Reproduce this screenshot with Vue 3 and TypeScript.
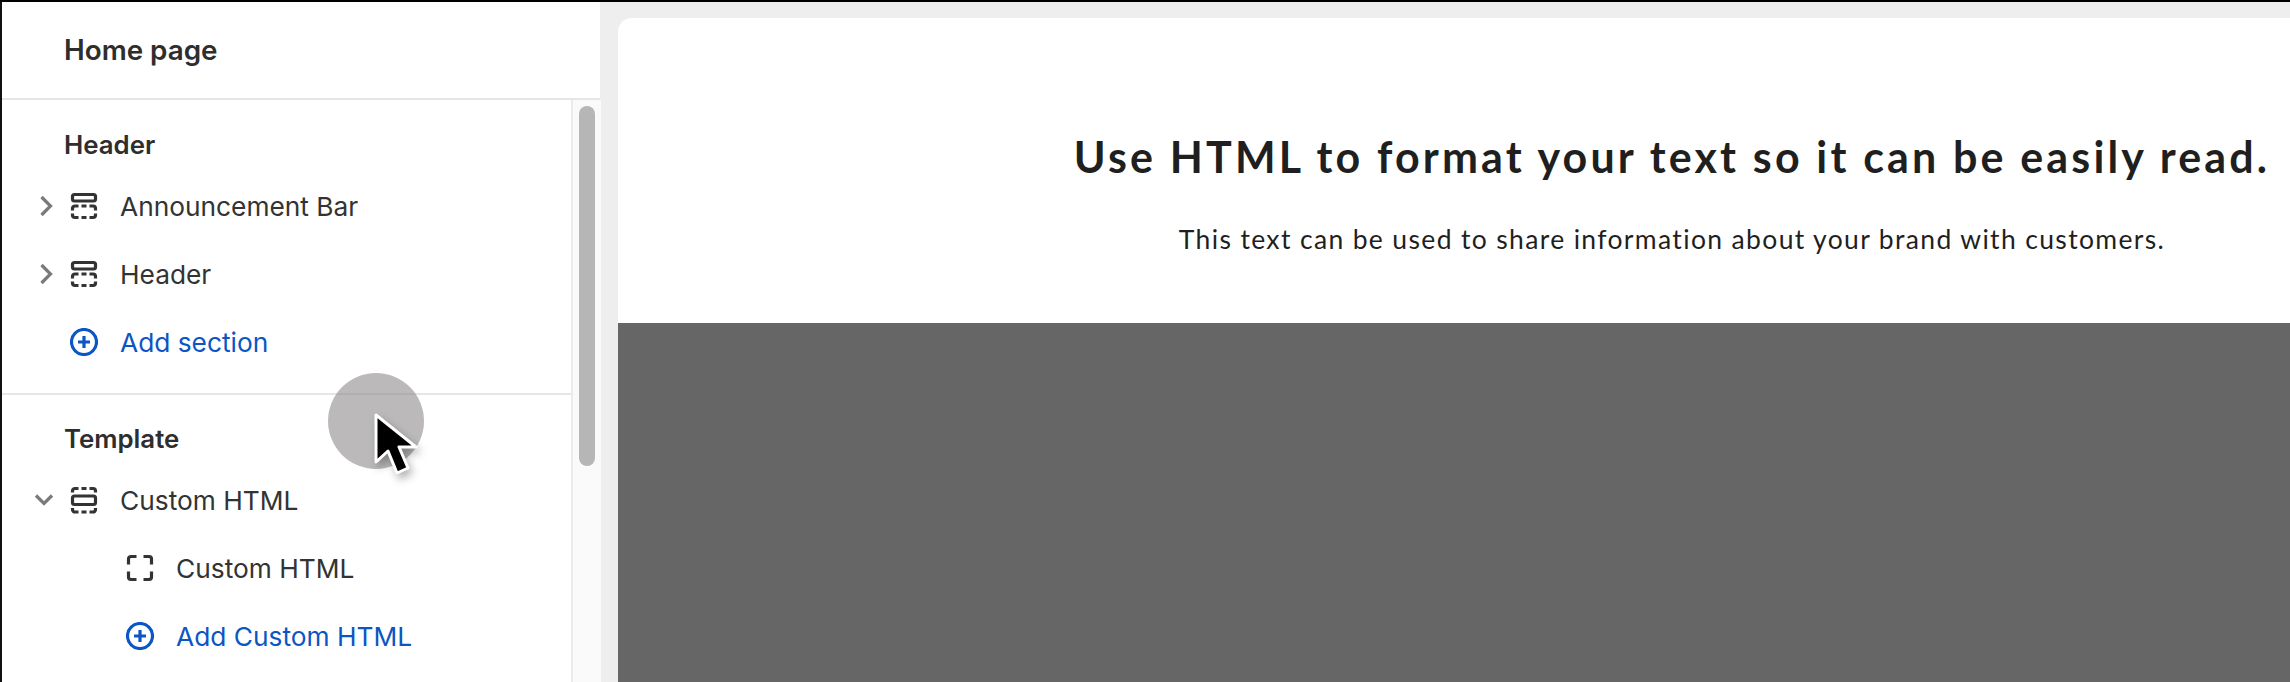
<template>
  <div class="page">
    <aside class="sidebar">
      <header class="side-head">Home page</header>
      <div class="side-body">
        <div class="tree">
          <section v-for="group in groups" :key="group.title" class="group">
            <h4 class="group-title">{{ group.title }}</h4>
            <div
              v-for="row in group.rows"
              :key="row.label"
              class="row"
              :class="{ nested: row.nested, link: row.icon === 'add' }"
            >
              <span class="chev">
                <svg v-if="row.chevron === 'right'" class="chev-right" width="14" height="22" viewBox="0 0 14 22">
                  <path d="M2.500 2l9 9-9 9" class="chev-line" />
                </svg>
                <svg v-if="row.chevron === 'down'" width="20" height="14" viewBox="0 0 20 14">
                  <path d="M2 2.5l8 8 8-8" class="chev-line" />
                </svg>
              </span>
              <svg class="icon" width="28" height="28" viewBox="0 0 28 28">
                <g v-if="row.icon === 'section'" class="glyph">
                  <rect x="2.5" y="2.5" width="23" height="6.5" rx="2" />
                  <path d="M2.500 18.500v-2a2.500 2.500 0 0 1 2.500-2.500h3.500M11.500 14h5M19.500 14H23a2.500 2.500 0 0 1 2.500 2.500v2M2.500 21.500v1.500a2.500 2.500 0 0 0 2.500 2.500h3.500M11.500 25.500h5M19.500 25.500H23a2.500 2.500 0 0 0 2.500-2.500v-1.500" />
                </g>
                <g v-else-if="row.icon === 'group'" class="glyph">
                  <rect x="2.500" y="10" width="23" height="8.500" rx="2" />
                  <path d="M2.500 6.500V5A2.500 2.500 0 0 1 5 2.500h3.500M11.500 2.500h5M19.500 2.500H23A2.500 2.500 0 0 1 25.500 5v1.500M2.500 22v1.500A2.500 2.500 0 0 0 5 26h3.500M11.500 26h5M19.500 26H23a2.500 2.500 0 0 0 2.500-2.500V22" />
                </g>
                <g v-else-if="row.icon === 'block'" class="glyph">
                  <path d="M2.500 10.500V5A2.500 2.500 0 0 1 5 2.500h5.500M17.500 2.500H23A2.500 2.500 0 0 1 25.500 5v5.500M2.500 17.500V23A2.500 2.500 0 0 0 5 25.500h5.500M17.500 25.500H23a2.500 2.500 0 0 0 2.500-2.500v-5.500" />
                </g>
                <g v-else class="glyph add">
                  <circle cx="14" cy="14" r="12.500" />
                  <path d="M14 8v12M8 14h12" />
                </g>
              </svg>
              <span class="label">{{ row.label }}</span>
            </div>
          </section>
        </div>
        <div class="scrollbar"><div class="thumb"></div></div>
      </div>
    </aside>

    <main class="canvas">
      <div class="preview">
        <div class="rich-text">
          <h2>Use HTML to format your text so it can be easily read.</h2>
          <p>This text can be used to share information about your brand with customers.</p>
        </div>
        <div class="placeholder"></div>
      </div>
    </main>

    <div class="pointer">
      <div class="halo"></div>
      <svg class="arrow" width="50" height="66" viewBox="0 0 50 66">
        <path d="M3 2v47l12-11 9 22 11-5-9-21h17z" fill="#000" stroke="#fff" stroke-width="3" stroke-linejoin="round" />
      </svg>
    </div>
  </div>
</template>

<script setup lang="ts">
interface Row {
  label: string
  icon: 'section' | 'group' | 'block' | 'add'
  chevron?: 'right' | 'down'
  nested?: boolean
}

const groups: { title: string; rows: Row[] }[] = [
  {
    title: 'Header',
    rows: [
      { label: 'Announcement Bar', icon: 'section', chevron: 'right' },
      { label: 'Header', icon: 'section', chevron: 'right' },
      { label: 'Add section', icon: 'add' }
    ]
  },
  {
    title: 'Template',
    rows: [
      { label: 'Custom HTML', icon: 'group', chevron: 'down' },
      { label: 'Custom HTML', icon: 'block', nested: true },
      { label: 'Add Custom HTML', icon: 'add', nested: true }
    ]
  }
]
</script>

<style>
html, body { margin: 0; overflow: hidden; background: #eee; }
</style>

<style scoped>
.page {
  position: relative;
  display: flex;
  width: 2290px;
  height: 682px;
  box-sizing: border-box;
  overflow: hidden;
  border-top: 2px solid #000;
  background: #eeeeee;
  font-family: Inter, "Liberation Sans", sans-serif;
}
.sidebar {
  width: 600px;
  flex: none;
  box-sizing: border-box;
  border-left: 2px solid #111;
  background: #fff;
  display: flex;
  flex-direction: column;
}
.side-head {
  height: 96px;
  flex: none;
  display: flex;
  align-items: center;
  padding-left: 62px;
  font-size: 27.800px;
  font-weight: 600;
  color: #2e2e2e;
  border-bottom: 2px solid #e6e6e6;
}
.side-body { flex: 1; display: flex; min-height: 0; }
.tree { width: 569px; flex: none; border-right: 2px solid #ebebeb; }
.scrollbar { flex: 1; padding: 6px 6px 0 6px; background: #fafafa; }
.thumb { width: 16px; height: 360px; border-radius: 8px; background: #b6b6b6; }

.group { padding: 16px 0 17px; }
.group + .group { border-top: 2px solid #e6e6e6; padding-top: 15px; }
.group-title {
  margin: 0;
  height: 56px;
  display: flex;
  align-items: center;
  padding-left: 62px;
  font-size: 25.800px;
  font-weight: 600;
  color: #2e2e2e;
}
.row {
  height: 68px;
  display: flex;
  align-items: center;
  font-size: 26.300px;
  color: #333;
}
.row.nested { padding-left: 56px; }
.row.link { color: #0b56c4; }
.chev {
  width: 68px;
  flex: none;
  display: flex;
  align-items: center;
  padding-left: 32px;
  box-sizing: border-box;
}
.chev-right { margin-left: 5px; }
.chev-line { fill: none; stroke: #7a7a7a; stroke-width: 3.2; }
.icon { flex: none; margin-right: 22px; }
.glyph { fill: none; stroke: #333; stroke-width: 3.2; }
.glyph.add { stroke: #0b56c4; }

.canvas { flex: 1; min-width: 0; padding: 16px 0 0 18px; overflow: hidden; }
.preview {
  width: 2108px;
  height: 100%;
  border-radius: 14px 14px 0 0;
  overflow: hidden;
  background: #fff;
  display: flex;
  flex-direction: column;
}
.rich-text {
  height: 305px;
  flex: none;
  box-sizing: border-box;
  padding-top: 114px;
  text-align: center;
  font-family: Lato, "Open Sans", sans-serif;
  color: #1f1f1f;
}
.rich-text h2 {
  margin: 0;
  font-size: 43px;
  line-height: 50px;
  font-weight: 700;
  letter-spacing: 3.150px;
}
.rich-text p {
  margin: 41px 0 0;
  font-size: 26.500px;
  line-height: 32px;
  letter-spacing: 1.350px;
}
.placeholder { flex: 1; background: #666; }

.pointer { position: absolute; left: 328px; top: 371px; width: 96px; height: 96px; }
.halo {
  width: 96px;
  height: 96px;
  border-radius: 50%;
  background: rgba(142, 138, 140, 0.6);
}
.arrow {
  position: absolute;
  left: 45px;
  top: 40px;
  filter: drop-shadow(3px 5px 4px rgba(0, 0, 0, 0.3));
}
</style>
